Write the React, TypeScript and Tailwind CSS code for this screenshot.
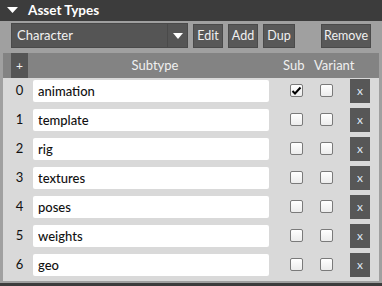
import { useState } from 'react';

type Row = { name: string; sub: boolean; variant: boolean };

const initialRows: Row[] = [
  { name: 'animation', sub: true, variant: false },
  { name: 'template', sub: false, variant: false },
  { name: 'rig', sub: false, variant: false },
  { name: 'textures', sub: false, variant: false },
  { name: 'poses', sub: false, variant: false },
  { name: 'weights', sub: false, variant: false },
  { name: 'geo', sub: false, variant: false },
];

function Check({ checked, onClick }: { checked: boolean; onClick: () => void }) {
  return (
    <button
      onClick={onClick}
      className="mt-[6px] w-[13px] h-[13px] rounded-[2px] border border-[#7a7a7a] bg-gradient-to-b from-white to-[#ececec] flex items-center justify-center shrink-0"
    >
      {checked && (
        <svg width="11" height="11" viewBox="0 0 11 11">
          <path d="M1.5 6 L4 8.5 L9.5 2.5" fill="none" stroke="#000" strokeWidth="2" />
        </svg>
      )}
    </button>
  );
}

function ToolButton({ label, className }: { label: string; className: string }) {
  return (
    <button
      className={`h-[24px] bg-[#585858] border border-[#4a4a4a] text-[#f0f0f0] text-[12.5px] leading-none ${className}`}
    >
      {label}
    </button>
  );
}

export default function App() {
  const [rows, setRows] = useState<Row[]>(initialRows);

  const toggle = (i: number, key: 'sub' | 'variant') =>
    setRows((r) => r.map((row, j) => (j === i ? { ...row, [key]: !row[key] } : row)));

  return (
    <div
      className="w-[382px] h-[286px] bg-[#a0a0a0] flex flex-col overflow-hidden"
      style={{ fontFamily: 'Lato, "Open Sans", sans-serif' }}
    >
      {/* title bar */}
      <div className="h-[21px] bg-[#3c3c3c] flex items-center shrink-0">
        <svg width="11" height="7" viewBox="0 0 11 7" className="ml-[7px]">
          <path d="M0 0 L11 0 L5.5 6 Z" fill="#fff" />
        </svg>
        <span className="ml-[10px] text-white text-[13.5px] font-bold leading-none">Asset Types</span>
      </div>

      {/* combo + buttons */}
      <div className="flex items-start pt-[2px] pl-[11px] h-[32px] shrink-0">
        <div className="w-[177px] h-[25px] bg-[#555555] border border-[#4a4a4a] flex items-center">
          <span className="flex-1 pl-[5px] text-[#f2f2f2] text-[13px] leading-none">Character</span>
          <div className="w-[20px] h-full border-l border-[#4a4a4a] flex items-center justify-center">
            <svg width="10" height="6" viewBox="0 0 10 6">
              <path d="M0 0 L10 0 L5 6 Z" fill="#fff" />
            </svg>
          </div>
        </div>
        <div className="flex mt-[1px]">
          <ToolButton label="Edit" className="ml-[5px] w-[30px]" />
          <ToolButton label="Add" className="ml-[5px] w-[30px]" />
          <ToolButton label="Dup" className="ml-[5px] w-[32px]" />
          <ToolButton label="Remove" className="ml-[26px] w-[50px]" />
        </div>
      </div>

      {/* table */}
      <div className="mx-[3px] flex flex-col">
        <div className="h-[25px] bg-[#838383] flex items-stretch text-[#f0f0f0] text-[13px]">
          <div className="w-[8px]" />
          <div className="w-[17px] bg-[#555555] flex items-center justify-center text-[12px]">+</div>
          <div className="w-[254px] flex items-center justify-center">Subtype</div>
          <div className="w-[32px] flex items-center pl-[1px]">Sub</div>
          <div className="flex items-center">Variant</div>
        </div>
        {rows.map((row, i) => (
          <div key={i} className="h-[29px] bg-[#d9d9d9] flex items-start">
            <div className="w-[8px]" />
            <div className="w-[17px] h-[26px] flex items-center justify-center text-[13px] text-[#111]">
              {i}
            </div>
            <input
              value={row.name}
              onChange={(e) =>
                setRows((r) => r.map((x, j) => (j === i ? { ...x, name: e.target.value } : x)))
              }
              className="mt-[2px] ml-[5px] w-[236px] h-[22px] rounded-[2px] bg-white pl-[5px] text-[13px] font-medium text-[#111] outline-none"
            />
            <div className="ml-[21px]">
              <Check checked={row.sub} onClick={() => toggle(i, 'sub')} />
            </div>
            <div className="ml-[17px]">
              <Check checked={row.variant} onClick={() => toggle(i, 'variant')} />
            </div>
            <button
              onClick={() => setRows((r) => r.filter((_, j) => j !== i))}
              className="mt-[1px] ml-[17px] w-[20px] h-[24px] bg-[#575757] text-[#dfe8f5] text-[12px] leading-none flex items-center justify-center"
            >
              x
            </button>
          </div>
        ))}
      </div>
      <div className="flex-1" />
      <div className="h-[3px] bg-[#3c3c3c] shrink-0" />
    </div>
  );
}
